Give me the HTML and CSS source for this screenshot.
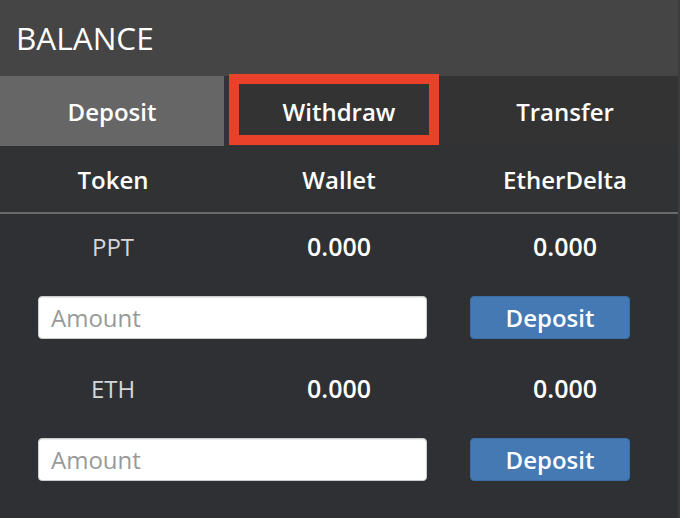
FILE: index.html
```html
<!DOCTYPE html>
<html lang="en">
<head>
    <meta charset="UTF-8">
    <meta name="viewport" content="width=device-width, initial-scale=1.0">
    <title>Balance</title>
    <link rel="stylesheet" href="styles.css">
</head>
<body>

    <div class="panel">
        <div class="panel-title">BALANCE</div>

        <div class="tabs">
            <div class="tab active">Deposit</div>
            <div class="tab">Withdraw</div>
            <div class="tab">Transfer</div>
        </div>
        <div class="highlight"></div>

        <div class="cols head">
            <div>Token</div>
            <div>Wallet</div>
            <div>EtherDelta</div>
        </div>

        <div class="balances">
            <div class="token-block">
                <div class="cols token-row">
                    <div class="token">PPT</div>
                    <div class="value">0.000</div>
                    <div class="value">0.000</div>
                </div>
                <form class="amount-form">
                    <input type="text" placeholder="Amount">
                    <button type="button">Deposit</button>
                </form>
            </div>

            <div class="token-block">
                <div class="cols token-row">
                    <div class="token">ETH</div>
                    <div class="value">0.000</div>
                    <div class="value">0.000</div>
                </div>
                <form class="amount-form">
                    <input type="text" placeholder="Amount">
                    <button type="button">Deposit</button>
                </form>
            </div>
        </div>
    </div>

</body>
</html>
```

FILE: styles.css
```css
/* --- Painel de saldo --- */
body {
    margin: 0;
    font-family: 'Open Sans', 'Liberation Sans', sans-serif;
    background-color: #2e3033;
    color: #fff;
}

.panel {
    position: relative;
    width: 678px;
    height: 518px;
    border-right: 2px solid #3b3c3e;
    background-color: #2e3033;
}

.panel-title {
    height: 76px;
    box-sizing: border-box;
    padding: 18px 0 0 16px;
    background-color: #454545;
    font-size: 31.5px;
    line-height: 40px;
}

.tabs {
    display: flex;
    height: 70px;
    background-color: #333;
}

.tab {
    flex: 1;
    display: flex;
    align-items: center;
    justify-content: center;
    font-size: 24px;
    font-weight: 600;
}

.tab.active {
    flex: 0 0 224px;
    margin-right: 2px;
    background-color: #666;
}

/* destaque vermelho por cima da aba */
.highlight {
    position: absolute;
    left: 229px;
    top: 74px;
    width: 190px;
    height: 51px;
    border: 10px solid #e9412a;
}

.cols {
    display: grid;
    grid-template-columns: repeat(3, 1fr);
    text-align: center;
    font-size: 24px;
    font-weight: 600;
}

.head {
    height: 66px;
    align-items: center;
    background-color: #313234;
    border-bottom: 2px solid #6a6a6a;
}

.balances {
    padding-top: 12px;
}

.token-block + .token-block {
    margin-top: 29px;
}

.token-row {
    height: 40px;
    align-items: center;
}

.token {
    color: #d6d6d6;
    font-weight: 400;
}

.value {
    font-size: 25px;
}

.amount-form {
    display: flex;
    margin: 30px 0 0 38px;
    gap: 43px;
}

.amount-form input {
    width: 389px;
    height: 43px;
    box-sizing: border-box;
    padding: 0 12px;
    border: 1px solid #ccc;
    border-radius: 4px;
    box-shadow: inset 0 1px 1px rgba(0, 0, 0, 0.08);
    font-family: inherit;
    font-size: 24px;
    color: #555;
}

.amount-form input::placeholder {
    color: #999;
}

.amount-form button {
    width: 160px;
    height: 43px;
    border: 1px solid #3c6ea6;
    border-radius: 4px;
    background-color: #4479b4;
    color: #fff;
    font-family: inherit;
    font-size: 24px;
    font-weight: 600;
    padding: 0;
}
```
